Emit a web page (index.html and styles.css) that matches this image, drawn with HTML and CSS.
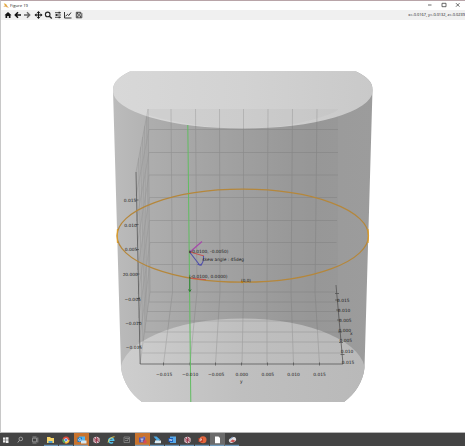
FILE: index.html
```html
<!DOCTYPE html>
<html lang="en">
<head>
<meta charset="utf-8">
<title>Figure 19</title>
<link rel="stylesheet" href="styles.css">
</head>
<body>
<div class="window">
  <header class="titlebar">
    <svg class="app-icon" viewBox="0 0 8 8"><path d="M1 1l3 1 2 5-3-2z" fill="#e9b23c"/><path d="M1 6l3-3 3 4" fill="none" stroke="#d99a58"/></svg>
    <span class="title">Figure 19</span>
    <svg class="controls" viewBox="0 0 36 9"><path d="M-1 4h3.500M13 2.300h4v3.400h-4zM27 2.200l3.500 3.500M30.500 2.200L27 5.700" fill="none" stroke="#444" stroke-width=".8"/></svg>
  </header>
  <nav class="toolbar">
    <svg class="tools" viewBox="0 0 84 10">
      <path d="M3.500 5.200L7 2l3.500 3.200h-1V8H7.800V6H6.200v2H4.500V5.200z" fill="#111"/>
      <path d="M17 2.300L14.300 5 17 7.700M14.600 5H20" fill="none" stroke="#111" stroke-width="1.500"/>
      <path d="M26 2.300L28.700 5 26 7.700M23 5h5.300" fill="none" stroke="#666" stroke-width="1.400"/>
      <path d="M37.500 2v6M34.500 5h6" stroke="#111" stroke-width="1.200"/>
      <path d="M37.500 1l1.700 2h-3.400zM37.500 9l1.700-2h-3.400zM33.500 5l2-1.700v3.400zM41.500 5l-2-1.700v3.400z" fill="#111"/>
      <circle cx="46.700" cy="4.400" r="2.300" fill="none" stroke="#222" stroke-width="1.100"/><path d="M48.400 6.200l2.400 2.300" stroke="#222" stroke-width="1.400"/>
      <path d="M54 2.700h6M54 5h6M54 7.300h6" stroke="#333" stroke-width=".9"/><path d="M58.200 1.800v1.800M55.700 4.100v1.800M58.200 6.400v1.800" stroke="#222" stroke-width="1.200"/>
      <path d="M63.500 2v6h7M64.500 6.300l2-2 1.300 1.200 2.200-3" fill="none" stroke="#333" stroke-width="1"/>
      <path d="M75.300 2.300h4.300l1.200 1.200v4.300h-5.500zM76.500 2.500v1.700h2.800V2.500M76.700 7.600V5.800h2.800v1.800" fill="none" stroke="#333" stroke-width=".9"/>
    </svg>
    <span class="coords">x=-0.0167, y=-0.0132, z=-0.0239</span>
  </nav>
  <main class="figure">
    <svg class="plot" viewBox="0 20 465 413">
      <defs>
        <linearGradient id="wall"><stop offset="0" stop-color="#bcbcbc"/><stop offset=".13" stop-color="#b3b3b3"/><stop offset=".45" stop-color="#a5a5a5"/><stop offset=".75" stop-color="#9a9a9a"/><stop offset="1" stop-color="#9c9c9c"/></linearGradient>
        <linearGradient id="cap"><stop offset="0" stop-color="#d8d8d8"/><stop offset=".5" stop-color="#d2d2d2"/><stop offset="1" stop-color="#c9c9c9"/></linearGradient>
        <linearGradient id="base"><stop offset="0" stop-color="#cecece"/><stop offset=".5" stop-color="#bfbfbf"/><stop offset="1" stop-color="#b9b9b9"/></linearGradient>
        <clipPath id="body"><path d="M113 90L121 368C123 382 131 394 142 402H344C355 394 363 382 364.500 368L372.500 90C373 82 366 76 356 71.500H130C120 76 113 82 113 90z"/></clipPath>
      </defs>
      <g clip-path="url(#body)">
        <rect x="112" y="70" width="262" height="333" fill="url(#wall)"/>
        <path d="M148 109H338V290L343 364H140L136 172z" fill="#777" opacity=".09"/>
        <path d="M112.900 70H372.500V91A129.800 37.500 0 0 1 112.900 91z" fill="url(#cap)"/>
        <path d="M120.200 403V372A122.500 53.500 0 0 1 365.200 372V403z" fill="url(#base)"/>
      </g>
      <path d="M148 109H338V110C326 117 310 120 290 125 258 130 218 129 190 124 171 121 158 118 148 115z" fill="#aaa" opacity=".14"/>
      <g class="grid">
        <path d="M148 109L150 292M171 109L172.500 292M195.500 109L197 292M219.500 109L220 292M243.500 109V292M268 109L267 292M292.500 109L291 292M317 109L315 292"/>
        <path d="M149 129.500H338M149 152.500H338M149 175H338M149.500 197.500H337M149.500 220.500H337M150 242.500H336.500M150 264.500H336.500M150 292H337"/>
        <path d="M149 302H338M147 311.500H339M146 321H339M145 332H340M144 342H341M142 353H342"/>
        <path d="M172.500 292L163.500 364M197 292L190 364M220 292L215.500 364M243.500 292L242 364M267 292V364M291 292L293.500 364M315 292L319.500 364M150 292L140 364"/>
        <path class="side" d="M146.500 117L149 302M144.500 126L147 311.500M142.500 137L146 321M140.500 147L145 332M138.500 158L143 342M136 172L148 109M136 196L149 129.500M136.500 221L149 152.500M137 246L149 175M137.500 270L149.500 197.500M138 294L149.500 220.500M138.500 318L150 242.500M139 342L150 264.500"/>
      </g>
      <path class="axis" d="M136 172L140.200 364H343L336 285"/>
      <path class="axis" d="M163.500 362.500v3M190 362.500v3M215.500 362.500v3M241.500 362.500v3M267.500 362.500v3M293.500 362.500v3M319.500 362.500v3M135.500 200h3M135.500 224.500h3M136 249.500h3M136.500 274h3M137 298.500h3M137.500 322.500h3M138 347h3M335 293.500h4M335 300h4M336 310h4M337 320h4M338 332h4M339 342.500h4M340.500 354.500h4"/>
      <path d="M187.800 125L190.800 402" stroke="#61bd61" stroke-width="1"/>
      <ellipse cx="242.800" cy="235.700" rx="125.700" ry="46.500" fill="none" stroke="#b5873b" stroke-width="1.200"/>
      <path d="M368 229q.8 7 0 14M117.500 229q-.8 7 0 14" fill="none" stroke="#dd9e2c" stroke-width="1.200"/>
      <circle cx="242" cy="282" r="1.300" fill="#c58a20"/>
      <path d="M190 252L202 241.500" stroke="#a648aa" stroke-width="1.200"/>
      <path d="M190 252L204 256M190 278L206 279.800" stroke="#c35351" stroke-width="1"/>
      <path d="M190 252.500L200 265.500M203.500 256Q204 263 200 265.500M197.500 264.500L202 265" fill="none" stroke="#5050aa" stroke-width="1.100"/>
      <path d="M189.800 277V291.500M188.500 289.500l1.300 2 1.300-2" fill="none" stroke="#317a36" stroke-width="1"/>
      <circle cx="190" cy="252" r="1" fill="#5a4150"/>
      <g class="label">
        <text x="189" y="253.300" textLength="39.500" lengthAdjust="spacingAndGlyphs">(-0.0100, -0.0050)</text>
        <text x="202.500" y="261.300" textLength="41.500" lengthAdjust="spacingAndGlyphs">skew angle : 45deg</text>
        <text x="189" y="278.300" textLength="38.500" lengthAdjust="spacingAndGlyphs">(-0.0100, 0.0000)</text>
        <text x="241" y="282.200" textLength="10" lengthAdjust="spacingAndGlyphs">(0,0)</text>
        <text x="123.800" y="201.500">0.015</text>
        <text x="124.200" y="226.500">0.010</text>
        <text x="124.800" y="251.300">0.005</text>
        <text x="123" y="276.200">z0.000</text>
        <text x="124.500" y="300.500">−0.005</text>
        <text x="125.200" y="324.500">−0.010</text>
        <text x="125.800" y="348.500">−0.015</text>
        <text x="156" y="375.500">−0.015</text>
        <text x="182" y="375.500">−0.010</text>
        <text x="208" y="375.500">−0.005</text>
        <text x="235.500" y="375.500">0.000</text>
        <text x="261.500" y="375.500">0.005</text>
        <text x="287.300" y="375.500">0.010</text>
        <text x="313.300" y="375.500">0.015</text>
        <text x="240" y="382.500">y</text>
        <text x="337" y="302">0.015</text>
        <text x="337.700" y="311.700">0.010</text>
        <text x="339" y="321.500">0.005</text>
        <text x="338.500" y="331.500">0.000</text>
        <text x="350" y="335">x</text>
        <text x="339.500" y="342">0.005</text>
        <text x="340.800" y="352.500">0.010</text>
        <text x="341.800" y="363.500">0.015</text>
      </g>
    </svg>
  </main>
</div>
<footer class="taskbar">
  <svg class="tasks" viewBox="0 433 465 13">
    <path d="M74 433h15v13H74zM135 433h15v13H135z" fill="#c9732d"/>
    <path d="M210 433h15v13H210z" fill="#6b6b6b"/>
    <path d="M44 445.300h14M59 445.300h14M74 445.300h14M135 445.300h14M150 445.300h14M165 445.300h14M180 445.300h14M195 445.300h14M210 445.300h14M225 445.300h14" stroke="#76a9d3" stroke-width="1"/>
    <path d="M3 437.500h2.300v2.300H3zM5.800 437.200h2.700v2.600H5.800zM3 440.300h2.300v2.300H3zM5.800 440.300h2.700v2.600H5.800z" fill="#eee"/>
    <circle cx="20.800" cy="438.900" r="1.800" fill="none" stroke="#bbb" stroke-width=".7"/><path d="M19.500 440.300L17.800 442.500" stroke="#bbb" stroke-width=".8"/>
    <path d="M32.500 438.200h4v3.600h-4zM37.800 437.500v5M32.500 437h4M32.500 443h4" fill="none" stroke="#aaa" stroke-width=".7"/>
    <path d="M47 437h3l1 1h3v5h-7z" fill="#f5d36a"/><path d="M48.500 441h4v2h-4z" fill="#4b9bd1"/>
    <circle cx="66" cy="440" r="3.500" fill="#dc4b3b"/><path d="M66 440l-3.400-1a3.500 3.500 0 0 0 2.400 4.300z" fill="#45a65a"/><path d="M66 440h3.500a3.500 3.500 0 0 1-4.500 3.300z" fill="#f5c63b"/><circle cx="66" cy="440" r="1.600" fill="#4b87e8" stroke="#fff" stroke-width=".5"/>
    <path d="M79 436.500h6v5h-6z" fill="#55b5ed"/><path d="M77.500 437.500h4.500v4.500h-4.500z" fill="#1675c4"/><path d="M81 440.500h5.500v3H81z" fill="#d5e6ef"/><circle cx="79.800" cy="439.800" r="1.200" fill="none" stroke="#fff" stroke-width=".7"/>
    <g id="slack"><circle cx="96.500" cy="440" r="3.300" fill="#d5c9cd"/><path d="M94 438l5 4M98.500 437.500l-4 5M96.500 436.800v6.400M93.500 440h6" stroke="#9b3448" stroke-width=".8"/></g>
    <path d="M109.500 440.200h4.200a2.500 2.500 0 1 0-.7 2" fill="none" stroke="#55c4ee" stroke-width="1.500"/><path d="M108 442.500q1-5 6.500-5.800" fill="none" stroke="#f2cf4c" stroke-width=".9"/>
    <path d="M124 437h5.500v5.500H124zM125 440.500h3M125 438.500h4M127 441l2-3" fill="none" stroke="#919191" stroke-width=".7"/>
    <circle cx="144" cy="437.800" r="1.500" fill="#777fd2"/><path d="M139 437.500h6v5h-6z" fill="#5558ad"/><path d="M140.500 439h3M142 439v3" stroke="#fff" stroke-width=".7"/><circle cx="145" cy="441.700" r="1.700" fill="#d84b56"/>
    <path d="M153.500 436.500h3l3.500 3-3 3.500h-3l2.500-3z" fill="#4eaae3"/><path d="M155 440.500h6v2.700h-6z" fill="#dce9ef"/>
    <path d="M170 436.500h6v6.500h-6z" fill="#58a9e8"/><path d="M168.500 438h4.500v4h-4.500z" fill="#185bbd"/><path d="M169.300 439l.7 2 .8-2 .7 2 .7-2" fill="none" stroke="#fff" stroke-width=".5"/>
    <use href="#slack" x="91"/>
    <circle cx="203" cy="439.800" r="3.500" fill="#e4673e"/><path d="M198.500 438h4.300v4h-4.300z" fill="#bd3b20"/><path d="M200 441.500v-2.700h1.500v1.400H200" fill="none" stroke="#fff" stroke-width=".6"/>
    <path d="M215 436.500h3.500l1.500 1.500v5.300h-5z" fill="#fff"/>
    <ellipse cx="232.500" cy="440" rx="3.800" ry="2.500" fill="#e1dfe3" transform="rotate(-25 232.500 440)"/><path d="M230 441.500l2.500-2 3 1.200-2 1.500z" fill="#cc5553"/><path d="M230 439l3-2" stroke="#7d9bc1"/>
  </svg>
</footer>
</body>
</html>
```

FILE: styles.css
```css
* { box-sizing: border-box; }
body {
  margin: 0;
  width: 465px;
  height: 446px;
  display: flex;
  flex-direction: column;
  overflow: hidden;
  background: #fff;
  font-family: "Open Sans", "Noto Sans", sans-serif;
}
svg { display: block; flex: none; }
.window {
  height: 433px;
  display: flex;
  flex-direction: column;
  border-top: 1px solid #b8a4a8;
  border-left: 1px solid #c8c8c8;
  border-bottom: 1px solid #b5b5b5;
}
.titlebar {
  height: 9px;
  display: flex;
  align-items: center;
  padding-left: 2px;
  background: #fff;
}
.app-icon { width: 6px; height: 7px; }
.title { margin-left: 1px; font-size: 4.2px; line-height: 8px; color: #222; }
.controls { width: 36px; height: 9px; margin-left: auto; overflow: visible; }
.toolbar {
  height: 10px;
  display: flex;
  align-items: center;
  justify-content: space-between;
  background: #f0f0f0;
}
.tools { width: 84px; height: 10px; }
.coords { font-size: 3.9px; line-height: 10px; color: #111; white-space: nowrap; }
.figure { height: 412px; overflow: hidden; }
.plot { width: 465px; height: 413px; margin-left: -1px; }
.grid { fill: none; stroke: #646464; stroke-width: .7; opacity: .33; }
.side { stroke-width: .5; }
.axis { fill: none; stroke: #4c4c4c; stroke-width: .7; }
.label { font-family: "DejaVu Sans", sans-serif; font-size: 4.4px; fill: #1c1c1c; text-rendering: geometricPrecision; }
.taskbar { height: 13px; background: #444; }
.tasks { width: 465px; height: 13px; }
```
